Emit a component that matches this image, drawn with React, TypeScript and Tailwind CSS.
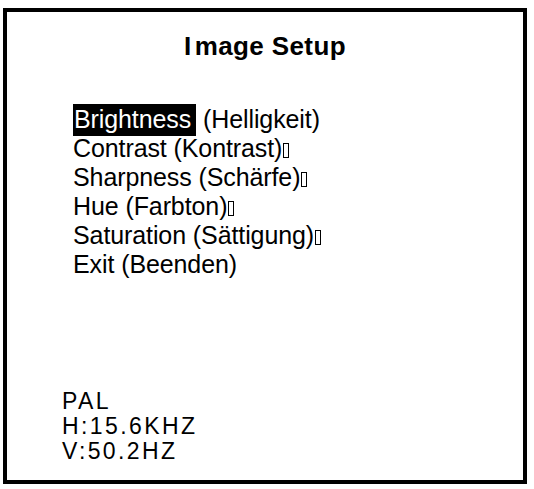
import React from "react";

const items = [
  { label: "Brightness", de: "Helligkeit", tofu: false },
  { label: "Contrast", de: "Kontrast", tofu: true },
  { label: "Sharpness", de: "Schärfe", tofu: true },
  { label: "Hue", de: "Farbton", tofu: true },
  { label: "Saturation", de: "Sättigung", tofu: true },
  { label: "Exit", de: "Beenden", tofu: false },
];

// missing-glyph box drawn after some menu lines
function Tofu() {
  return <span className="inline-block w-[6px] h-[15px] border border-black ml-[1px] align-[-1px]" />;
}

export default function App() {
  const selected = 0;
  return (
    <div className="w-[534px] h-[489px] bg-white pt-[8px] pl-[3px] text-black" style={{ fontFamily: '"Liberation Sans", Arial, sans-serif' }}>
      <div className="w-[524px] h-[476px] border-[4px] border-black flex flex-col">
        <h1 className="text-center font-bold text-[26px] leading-none mt-[21px] tracking-[0.4px]">
          I<span className="ml-[3px]">mage Setup</span>
        </h1>
        <ul className="mt-[46px] ml-[66px] text-[25px] tracking-[-0.1px]">
          {items.map((it, i) => (
            <li key={it.label} className="h-[29px] leading-[29px]">
              <span className={i === selected ? "bg-black text-white pl-[1px] pr-[5px] pt-[1px] pb-[3px]" : ""}>{it.label}</span>{" "}
              ({it.de}){it.tofu && <Tofu />}
            </li>
          ))}
        </ul>
        <div className="mt-auto mb-[16px] ml-[55px] text-[23px] leading-[25px] tracking-[2.4px]">
          <div>PAL</div>
          <div>H:15.6KHZ</div>
          <div>V:50.2HZ</div>
        </div>
      </div>
    </div>
  );
}
